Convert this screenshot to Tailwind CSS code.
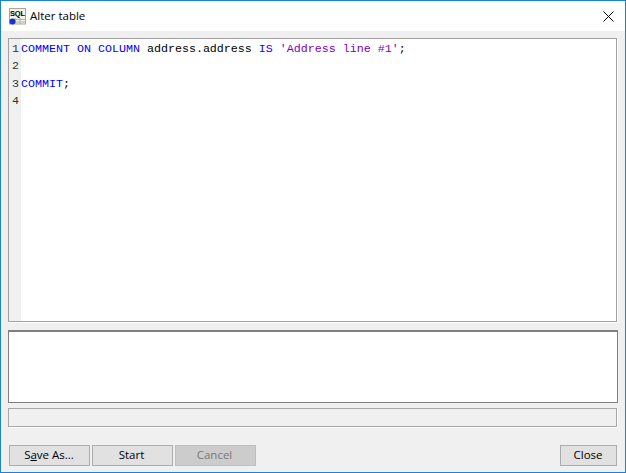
<!DOCTYPE html>
<html>
<head>
<meta charset="utf-8">
<title>Alter table</title>
<script src="https://cdn.jsdelivr.net/npm/@tailwindcss/browser@4"></script>
</head>
<body>
<!-- window -->
<div class="w-[626px] h-[473px] flex flex-col border border-[#1883d7] bg-[#f0f0f0] overflow-hidden font-['Open_Sans','Noto_Sans',sans-serif] text-[11.5px] text-black">
    <!-- title bar -->
    <div class="h-[30px] bg-white flex items-center shrink-0">
        <svg class="ml-[8px] mr-[4px]" width="17" height="17" viewBox="0 0 17 17">
            <rect x="0.5" y="0.5" width="16" height="15.5" fill="#f4f2e4" stroke="#a8a898"/>
            <path d="M1 11.5H16M1 14H16M6 10V16M11 10V16" stroke="#b4b4a4" fill="none"/>
            <text x="1" y="7.5" textLength="15" font-family="Liberation Sans" font-size="7.5" font-weight="700" fill="#000">SQL</text>
            <circle cx="3.5" cy="13.5" r="3" fill="#1a2fd0"/>
        </svg>
        <span>Alter table</span>
        <svg class="ml-auto mr-[11px]" width="11" height="11" viewBox="0 0 11 11">
            <path d="M0.5 0.5L10.5 10.5M10.5 0.5L0.5 10.5" stroke="#000" stroke-width="1" fill="none"/>
        </svg>
    </div>

    <div class="flex-1 flex flex-col pl-[7px]">
        <!-- editor -->
        <div class="mt-[7px] h-[284px] w-[609px] flex bg-white border border-[#a0a0a0] shadow-[1px_1px_0_#fff] font-['Liberation_Mono',monospace] text-[11.67px] leading-[17.33px]">
            <div class="w-[12px] bg-[#f0f0f0] text-[#333] pt-[2px] text-right pr-[2px] shrink-0">
                <div>1</div>
                <div>2</div>
                <div>3</div>
                <div>4</div>
            </div>
            <div class="pt-[2px]">
                <div class="whitespace-pre"><span class="text-[#0000ff]">COMMENT ON COLUMN</span> address.address <span class="text-[#0000ff]">IS</span> <span class="text-[#8000c0]">'Address line #1'</span>;</div>
                <div>&nbsp;</div>
                <div><span class="text-[#0000ff]">COMMIT</span>;</div>
                <div>&nbsp;</div>
            </div>
        </div>

        <!-- log output -->
        <div class="mt-[8px] h-[73px] w-[610px] bg-white border border-[#808080] border-t-2"></div>

        <!-- progress -->
        <div class="mt-[5px] h-[19px] w-[609px] bg-[#f0f0f0] border border-[#a8a8a8] shadow-[1px_1px_0_#fff]"></div>

        <!-- buttons -->
        <div class="mt-[18px] flex pl-[1px] w-[609px]">
            <button class="w-[81px] h-[21px] pb-[2px] pr-[1px] bg-[#e1e1e1] border border-[#adadad]"><span>S<span class="underline">a</span>ve As...</span></button>
            <button class="w-[81px] h-[21px] pb-[2px] pr-[2px] ml-[2px] bg-[#e1e1e1] border border-[#adadad]">Start</button>
            <button class="w-[81px] h-[21px] pb-[2px] pr-[2px] ml-[2px] bg-[#cccccc] border border-[#bfbfbf] text-[#787878]">Cancel</button>
            <button class="w-[57px] h-[21px] pb-[2px] pr-[1px] ml-auto bg-[#e1e1e1] border border-[#adadad]">Close</button>
        </div>
    </div>
</div>
</body>
</html>
